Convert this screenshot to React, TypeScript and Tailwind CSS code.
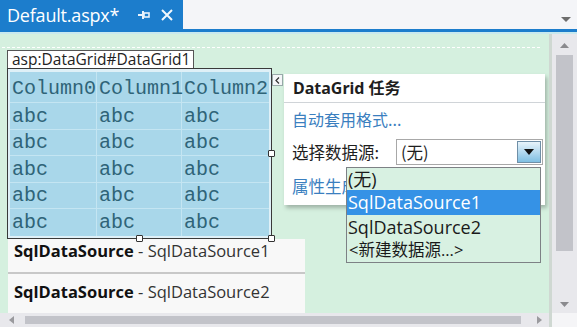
import React from 'react';

const sans = "font-['Noto_Sans','Noto_Sans_CJK_SC',sans-serif]";
const cjk = "font-['Noto_Sans_CJK_SC','Noto_Sans',sans-serif]";

const columns = ['Column0', 'Column1', 'Column2'];
const rows = [0, 1, 2, 3, 4];
const colWidths = ['w-[87px]', 'w-[85px]', 'w-[86px]'];

const Handle: React.FC<{ className: string }> = ({ className }) => (
  <div className={`absolute w-[7px] h-[7px] bg-white border border-[#333] rounded-[1px] ${className}`} />
);

const App: React.FC = () => {
  return (
    <div className={`w-[577px] h-[327px] overflow-hidden flex flex-col bg-[#f5f5f7] ${sans}`}>
      {/* Tab strip */}
      <div className="h-[29px] flex items-stretch bg-[#f4f5f8]">
        <div className="w-[183px] bg-[#1c7dcc] flex items-center pl-[7px] text-white">
          <span className="text-[18px] leading-none tracking-[-0.2px] font-['Open_Sans',sans-serif]">Default.aspx*</span>
          <svg className="ml-[19px]" width="12" height="10" viewBox="0 0 12 10">
            <rect x="0" y="4" width="4" height="2" fill="#e8f2fb" />
            <rect x="4" y="1" width="2" height="8" fill="#e8f2fb" />
            <rect x="6" y="3" width="5" height="4" fill="none" stroke="#e8f2fb" strokeWidth="1.6" />
          </svg>
          <svg className="ml-[11px]" width="12" height="12" viewBox="0 0 12 12">
            <path d="M1 1 L11 11 M11 1 L1 11" stroke="#f2f8fd" strokeWidth="2" />
          </svg>
        </div>
        <div className="flex-1 flex items-end justify-end pr-[6px] pb-[7px]">
          <svg width="10" height="5" viewBox="0 0 10 5">
            <path d="M0 0 H10 L5 5 Z" fill="#6d6d6d" />
          </svg>
        </div>
      </div>
      <div className="h-[3px] bg-[#1c7dcc]" />
      <div className="h-[2px] bg-[#c9e9ee]" />

      <div className="flex-1 flex min-h-0">
        {/* Designer surface + horizontal scrollbar */}
        <div className="w-[549px] flex flex-col">
          <div className="flex-1 relative bg-[#d5f0df] overflow-hidden">
            <div className="mt-[13px] ml-[2px] mr-[9px] h-[400px] border-t border-dashed border-white pt-[2px] pl-[5px]">
              {/* tag */}
              <div className="w-[187px] h-[18px] bg-white border border-[#555] border-b-0 flex items-center pl-[4px] text-[15.5px] leading-none text-[#222] font-['Open_Sans',sans-serif]">
                asp:DataGrid#DataGrid1
              </div>
              {/* grid */}
              <div className="relative w-[265px] border border-[#3a3a3a] px-[2px] pt-[3px] pb-[2px] bg-[#dff0f7]">
                <div className="bg-[#a9d7ea] font-['Liberation_Mono',monospace] text-[20px] text-[#2f6478]">
                  <div className="flex h-[31px] border-b border-[#c4e5f2]">
                    {columns.map((c, i) => (
                      <div key={c} className={`${colWidths[i]} flex items-center pl-[2px] pt-[4px] border-r border-[#c4e5f2] last:border-r-0`}>{c}</div>
                    ))}
                  </div>
                  {rows.map((r) => (
                    <div key={r} className="flex h-[26.5px] border-b border-[#c4e5f2] last:border-b-0">
                      {columns.map((c, i) => (
                        <div key={c} className={`${colWidths[i]} flex items-center pl-[2px] pt-[2px] border-r border-[#c4e5f2] last:border-r-0`}>abc</div>
                      ))}
                    </div>
                  ))}
                </div>
                <Handle className="right-[-4px] top-[81px]" />
                <Handle className="left-[128px] bottom-[-4px]" />
                <Handle className="right-[-4px] bottom-[-4px]" />
                {/* smart tag */}
                <div className="absolute right-[-12px] top-[5px] w-[11px] h-[12px] bg-[#f4f6f8] border border-[#9aa] flex items-center justify-center">
                  <svg width="5" height="7" viewBox="0 0 5 7">
                    <path d="M4 0.5 L1 3.5 L4 6.5" stroke="#333" strokeWidth="1.2" fill="none" />
                  </svg>
                </div>
              </div>
              {/* data sources */}
              <div className="w-[297px] ml-[1px] bg-[#f8f8f8] text-[16.5px] text-[#333] font-['Open_Sans',sans-serif]">
                <div className="h-[35px] pl-[6px] border-b-2 border-[#c8c8c8]">
                  <span className="font-bold text-[#111]">SqlDataSource</span> - SqlDataSource1
                </div>
                <div className="h-[40px] pl-[6px] pt-[6px]">
                  <span className="font-bold text-[#111]">SqlDataSource</span> - SqlDataSource2
                </div>
              </div>
            </div>

            {/* Task panel */}
            <div className="absolute left-[284px] top-[40px] w-[261px] h-[131px] bg-white shadow-[2px_3px_4px_rgba(0,0,0,0.25)]">
              <div className="h-[29px] border-b border-[#d0d4d8] flex items-center pl-[9px]">
                <span className={`text-[16px] font-bold text-[#1e1e1e] ${sans}`}>DataGrid 任务</span>
              </div>
              <div className={`pl-[8px] pt-[4px] text-[16px] text-[#3b7fbf] ${cjk}`}>自动套用格式...</div>
              <div className="flex items-center mt-[8px] pl-[8px]">
                <span className={`w-[104px] text-[16.5px] text-[#1e1e1e] ${cjk}`}>选择数据源:</span>
                <div className="w-[147px] h-[26px] border border-[#a8a8a8] flex items-center pl-[4px] relative">
                  <span className={`text-[16.5px] text-[#1e1e1e] ${cjk}`}>(无)</span>
                  <div className="absolute right-[1px] top-[1px] w-[24px] h-[22px] border border-[#6f8fa7] bg-gradient-to-b from-[#e8f4fb] to-[#7fbfe2] flex items-center justify-center">
                    <svg width="10" height="6" viewBox="0 0 10 6">
                      <path d="M0 0 H10 L5 6 Z" fill="#111" />
                    </svg>
                  </div>
                </div>
              </div>
              <div className={`ml-[8px] mt-[9px] w-[54px] overflow-hidden whitespace-nowrap text-[16.5px] text-[#3b7fbf] ${cjk}`}>属性生成器...</div>
            </div>

            {/* Dropdown list */}
            <div className="absolute left-[346px] top-[133px] w-[195px] h-[96px] border border-[#7d8185] bg-[#d8f1e2] text-[18px] text-[#1a1a1a] font-['Open_Sans','Noto_Sans_CJK_SC',sans-serif]">
              <div className="h-[22px] flex items-center pl-[1px]">(无)</div>
              <div className="h-[25px] flex items-center pl-[1px] bg-[#3592e6] text-white">SqlDataSource1</div>
              <div className="h-[24px] flex items-center pl-[1px]">SqlDataSource2</div>
              <div className="h-[23px] flex items-center pl-[2px] text-[16.5px]">&lt;新建数据源...&gt;</div>
            </div>
          </div>
          {/* horizontal scrollbar */}
          <div className="h-[14px] bg-[#e8e8ec] flex items-center">
            <svg className="ml-[9px]" width="5" height="8" viewBox="0 0 5 8">
              <path d="M5 0 V8 L0 4 Z" fill="#9a9a9e" />
            </svg>
            <div className="ml-[11px] w-[496px] h-[8px] bg-[#c2c3c9]" />
            <svg className="ml-[16px]" width="5" height="8" viewBox="0 0 5 8">
              <path d="M0 0 V8 L5 4 Z" fill="#9a9a9e" />
            </svg>
          </div>
        </div>
        {/* vertical scrollbar */}
        <div className="flex-1 flex flex-col border-l-[3px] border-[#cfd8d2]">
          <div className="flex-1 bg-[#e8e8ec] flex flex-col items-center pt-[9px]">
            <svg width="9" height="5" viewBox="0 0 9 5">
              <path d="M0 5 H9 L4.5 0 Z" fill="#8a8a8e" />
            </svg>
            <div className="mt-[7px] w-[17px] h-[196px] bg-[#c2c3c9]" />
            <div className="flex-1" />
            <svg className="mb-[6px]" width="9" height="5" viewBox="0 0 9 5">
              <path d="M0 0 H9 L4.5 5 Z" fill="#8a8a8e" />
            </svg>
          </div>
          <div className="h-[14px] bg-[#f5f5f7]" />
        </div>
      </div>
    </div>
  );
};

export default App;
